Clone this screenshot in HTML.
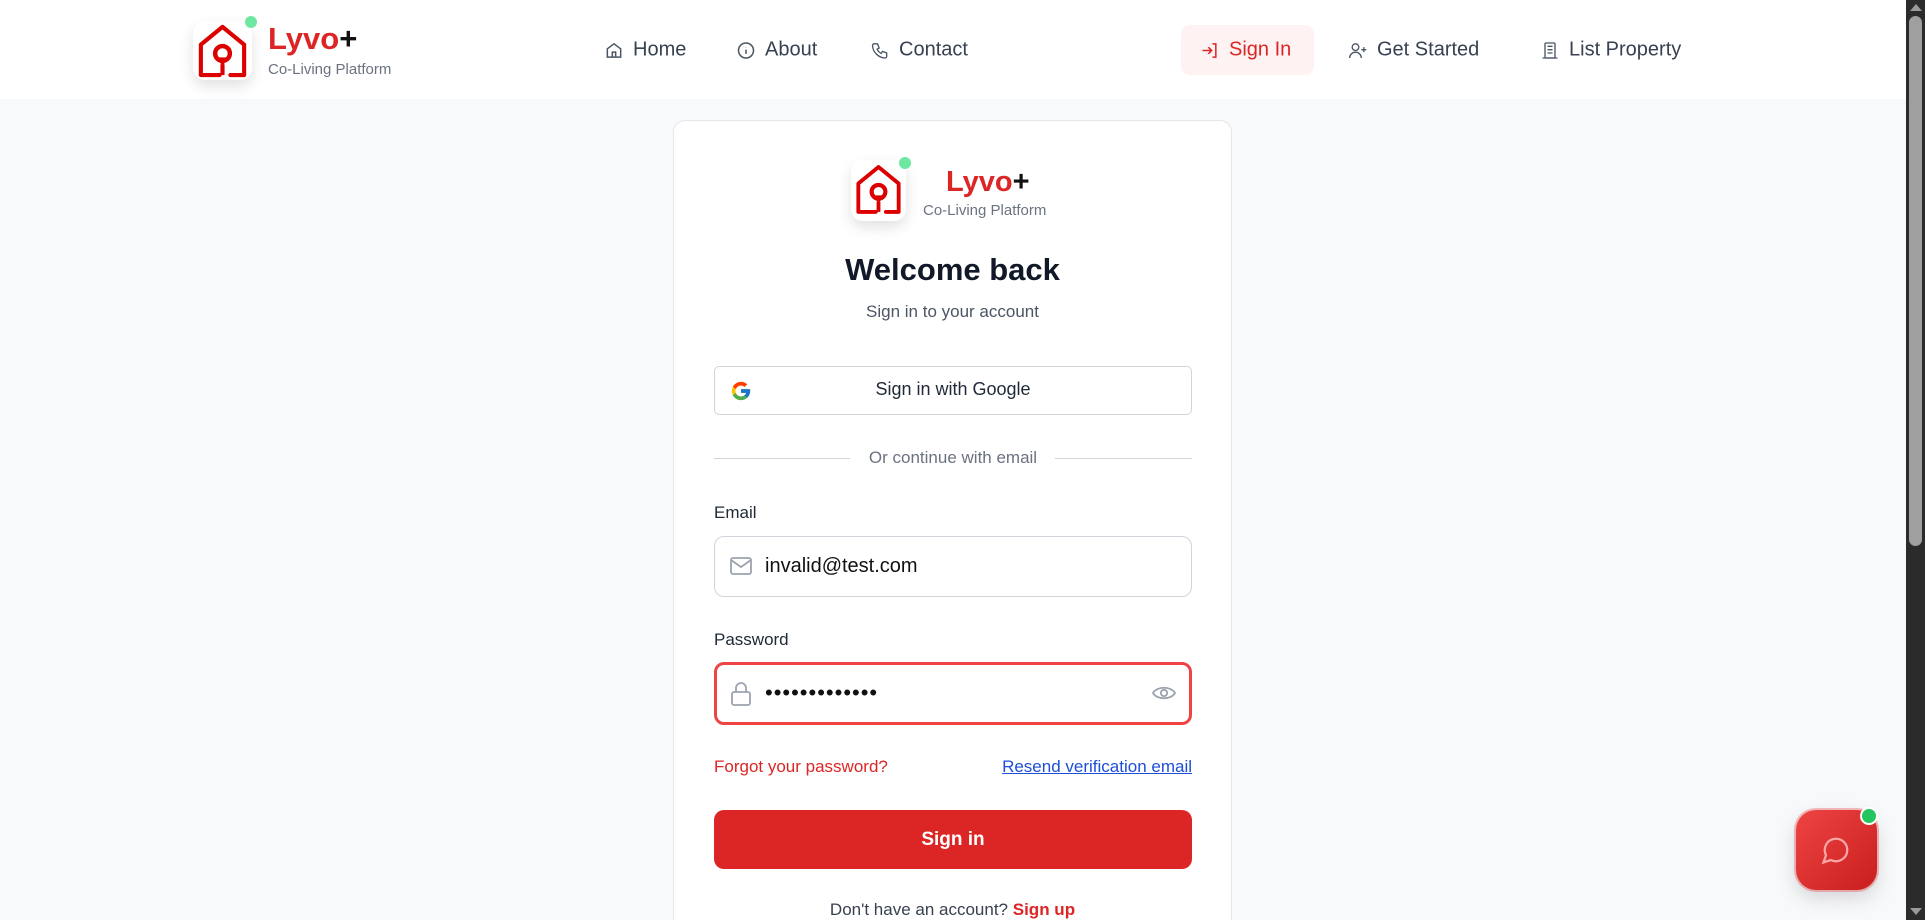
<!DOCTYPE html>
<html style="width:1925px;height:920px;overflow:hidden"><head><meta charset="utf-8">
<style>
*{box-sizing:border-box;margin:0;padding:0}
body{width:1925px;height:920px;overflow:hidden;background:#f8f9fb;font-family:"Liberation Sans",sans-serif;position:relative;color:#1f2937}
.abs{position:absolute}
header{position:absolute;left:0;top:0;width:1906px;height:99px;background:#fff}
.nav{position:absolute;top:50px;transform:translateY(-50%);font-size:20px;color:#374151;display:flex;align-items:center;gap:9px;white-space:nowrap}
.nav svg{width:20px;height:20px}
.logobox{position:absolute;background:#fff;border-radius:12px;box-shadow:0 6px 14px rgba(0,0,0,.12)}
.dot{position:absolute;border-radius:50%;background:#6ee7a0}
.card{position:absolute;left:673px;top:120px;width:559px;height:800px;background:#fff;border:1px solid #e5e7eb;border-bottom:none;border-radius:12px 12px 0 0}
.inp{position:absolute;left:714px;width:478px;border-radius:10px;background:#fff}
.lbl{position:absolute;left:714px;font-size:17px;color:#1f2937}
.scroll{position:absolute;left:1906px;top:0;width:19px;height:920px;background:#2b2b2b}
</style></head><body>
<header>
  <div class="logobox" style="left:193px;top:21px;width:59px;height:59px">
    <svg width="59" height="59" viewBox="0 0 60 60"><path d="M27 55 H8 V24 L30 6 L52 24 V55 H38" fill="none" stroke="#dc0000" stroke-width="4.2" stroke-linejoin="round" stroke-linecap="round"/><circle cx="30" cy="33" r="7.5" fill="none" stroke="#dc0000" stroke-width="4.5"/><path d="M24 37 L30 46 L36 37 Z" fill="#dc0000"/><path d="M30 44 V55" stroke="#dc0000" stroke-width="4.2"/></svg>
  </div>
  <div class="dot" style="left:245px;top:16px;width:12px;height:12px"></div>
  <div class="abs" style="left:268px;top:22px;font-size:31px;font-weight:bold;color:#dc2626;line-height:34px">Lyvo<span style="color:#111">+</span></div>
  <div class="abs" style="left:268px;top:61px;font-size:15px;color:#6b7280">Co-Living Platform</div>

  <div class="nav" style="left:604px"><svg viewBox="0 0 24 24" fill="none" stroke="#4b5563" stroke-width="1.8"><path d="M4 10 L12 4 L20 10 V20 H4 Z"/><path d="M10 20 V14 H14 V20"/></svg>Home</div>
  <div class="nav" style="left:736px"><svg viewBox="0 0 24 24" fill="none" stroke="#4b5563" stroke-width="1.8"><circle cx="12" cy="12" r="9"/><path d="M12 11 V16 M12 8 V8.2"/></svg>About</div>
  <div class="nav" style="left:870px"><svg viewBox="0 0 24 24" fill="none" stroke="#4b5563" stroke-width="1.6"><path d="M5 4 H9 L11 9 L8.5 10.5 A11 11 0 0 0 13.5 15.5 L15 13 L20 15 V19 A2 2 0 0 1 18 21 A16 16 0 0 1 3 6 A2 2 0 0 1 5 4"/></svg>Contact</div>

  <div class="abs" style="left:1181px;top:25px;width:133px;height:50px;background:#fef2f2;border-radius:9px"></div>
  <div class="nav" style="left:1200px;color:#dc2626"><svg viewBox="0 0 24 24" fill="none" stroke="#dc2626" stroke-width="1.8"><path d="M15 4 H19 V20 H15 M3 12 H14 M10 8 L14 12 L10 16"/></svg>Sign In</div>
  <div class="nav" style="left:1348px"><svg viewBox="0 0 24 24" fill="none" stroke="#4b5563" stroke-width="1.6"><circle cx="9" cy="8" r="4"/><path d="M2 21 A7 7 0 0 1 16 21 M19 8 V14 M16 11 H22"/></svg>Get Started</div>
  <div class="nav" style="left:1540px"><svg viewBox="0 0 24 24" fill="none" stroke="#4b5563" stroke-width="1.6"><rect x="6" y="3" width="12" height="18" rx="1"/><path d="M9 7H15M9 11H15M9 15H15M3 21H21"/></svg>List Property</div>
</header>

<div class="card"></div>
<div class="logobox" style="left:851px;top:160px;width:55px;height:61px">
  <svg width="55" height="58" viewBox="0 0 60 60"><path d="M27 55 H8 V24 L30 6 L52 24 V55 H38" fill="none" stroke="#dc0000" stroke-width="4.2" stroke-linejoin="round" stroke-linecap="round"/><circle cx="30" cy="33" r="7.5" fill="none" stroke="#dc0000" stroke-width="4.5"/><path d="M24 37 L30 46 L36 37 Z" fill="#dc0000"/><path d="M30 44 V55" stroke="#dc0000" stroke-width="4.2"/></svg>
</div>
<div class="dot" style="left:899px;top:157px;width:12px;height:12px"></div>
<div class="abs" style="left:946px;top:165px;font-size:29px;font-weight:bold;color:#dc2626;line-height:34px">Lyvo<span style="color:#111">+</span></div>
<div class="abs" style="left:923px;top:202px;font-size:15px;color:#6b7280">Co-Living Platform</div>
<div class="abs" style="left:673px;width:559px;top:252px;text-align:center;font-size:31px;font-weight:bold;color:#111827">Welcome back</div>
<div class="abs" style="left:673px;width:559px;top:302px;text-align:center;font-size:17px;color:#4b5563">Sign in to your account</div>

<div class="inp" style="top:366px;height:49px;border:1px solid #d1d5db;border-radius:5px"></div>
<svg class="abs" style="left:730px;top:380px" width="22" height="22" viewBox="0 0 48 48"><path fill="#FFC107" d="M43.6 20.1H42V20H24v8h11.3C33.7 32.7 29.2 36 24 36c-6.6 0-12-5.4-12-12s5.4-12 12-12c3.1 0 5.8 1.2 7.9 3.1l5.7-5.7C34 6.1 29.3 4 24 4 12.9 4 4 12.9 4 24s8.9 20 20 20 20-8.9 20-20c0-1.3-.1-2.6-.4-3.9z"/><path fill="#FF3D00" d="M6.3 14.7l6.6 4.8C14.7 15.1 19 12 24 12c3.1 0 5.8 1.2 7.9 3.1l5.7-5.7C34 6.1 29.3 4 24 4 16.3 4 9.7 8.3 6.3 14.7z"/><path fill="#4CAF50" d="M24 44c5.2 0 9.9-2 13.4-5.2l-6.2-5.2C29.2 35.1 26.7 36 24 36c-5.2 0-9.6-3.3-11.3-7.9l-6.5 5C9.5 39.6 16.2 44 24 44z"/><path fill="#1976D2" d="M43.6 20.1H42V20H24v8h11.3c-.8 2.2-2.2 4.2-4.1 5.6l6.2 5.2C37 39.2 44 34 44 24c0-1.3-.1-2.6-.4-3.9z"/></svg>
<div class="abs" style="left:714px;width:478px;top:379px;text-align:center;font-size:18px;color:#1f2937">Sign in with Google</div>

<div class="abs" style="left:714px;top:458px;width:136px;height:1px;background:#d1d5db"></div>
<div class="abs" style="left:1055px;top:458px;width:137px;height:1px;background:#d1d5db"></div>
<div class="abs" style="left:714px;width:478px;top:448px;text-align:center;font-size:17px;color:#6b7280">Or continue with email</div>

<div class="lbl" style="top:503px">Email</div>
<div class="inp" style="top:536px;height:61px;border:1px solid #d1d5db"></div>
<svg class="abs" style="left:729px;top:555px" width="24" height="22" viewBox="0 0 24 22" fill="none" stroke="#9ca3af" stroke-width="1.8"><rect x="2" y="3" width="20" height="16" rx="2"/><path d="M2 5 L12 12 L22 5"/></svg>
<div class="abs" style="left:765px;top:555px;font-size:20px;color:#111">invalid@test.com</div>

<div class="lbl" style="top:630px">Password</div>
<div class="inp" style="top:662px;height:63px;border:3px solid #ef4444"></div>
<svg class="abs" style="left:729px;top:681px" width="24" height="26" viewBox="0 0 24 26" fill="none" stroke="#9ca3af" stroke-width="1.8"><rect x="3" y="11" width="18" height="13" rx="2"/><path d="M7 11 V7 A5 5 0 0 1 17 7 V11"/></svg>
<div class="abs" style="left:765px;top:680px;font-size:22px;color:#111;letter-spacing:1px">•••••••••••••</div>
<svg class="abs" style="left:1152px;top:683px" width="24" height="20" viewBox="0 0 24 20" fill="none" stroke="#9ca3af" stroke-width="1.8"><path d="M1 10 C5 3 19 3 23 10 C19 17 5 17 1 10 Z"/><circle cx="12" cy="10" r="3.2"/></svg>

<div class="abs" style="left:714px;top:757px;font-size:17px;color:#dc2626">Forgot your password?</div>
<div class="abs" style="right:733px;top:757px;font-size:17px;color:#1d4ed8;text-decoration:underline">Resend verification email</div>

<div class="abs" style="left:714px;top:810px;width:478px;height:59px;background:#dc2626;border-radius:10px;color:#fff;font-weight:bold;font-size:19px;text-align:center;line-height:59px">Sign in</div>
<div class="abs" style="left:673px;width:559px;top:900px;height:20px;overflow:hidden;text-align:center;font-size:17px;color:#374151">Don't have an account? <span style="color:#dc2626;font-weight:bold">Sign up</span></div>

<div class="abs" style="left:1796px;top:810px;width:81px;height:80px;border-radius:20px;background:linear-gradient(135deg,#ef4444,#c81e1e);box-shadow:0 0 0 2px rgba(239,68,68,.35),0 8px 20px rgba(0,0,0,.15)"></div>
<svg class="abs" style="left:1821px;top:835px" width="30" height="30" viewBox="0 0 24 24" fill="none" stroke="#fca5a5" stroke-width="1.8"><path d="M7.9 20 A9 9 0 1 0 4 16.1 L2 22 Z"/></svg>
<div class="abs" style="left:1860px;top:807px;width:18px;height:18px;border-radius:50%;background:#22c55e;border:2px solid #fff"></div>

<div class="scroll">
  <div class="abs" style="left:4px;top:4px;width:0;height:0;border-left:6px solid transparent;border-right:6px solid transparent;border-bottom:7px solid #9a9a9a"></div>
  <div class="abs" style="left:3px;top:16px;width:13px;height:530px;border-radius:7px;background:#9f9f9f"></div>
  <div class="abs" style="left:4px;top:908px;width:0;height:0;border-left:6px solid transparent;border-right:6px solid transparent;border-top:7px solid #9a9a9a"></div>
</div>
</body></html>
